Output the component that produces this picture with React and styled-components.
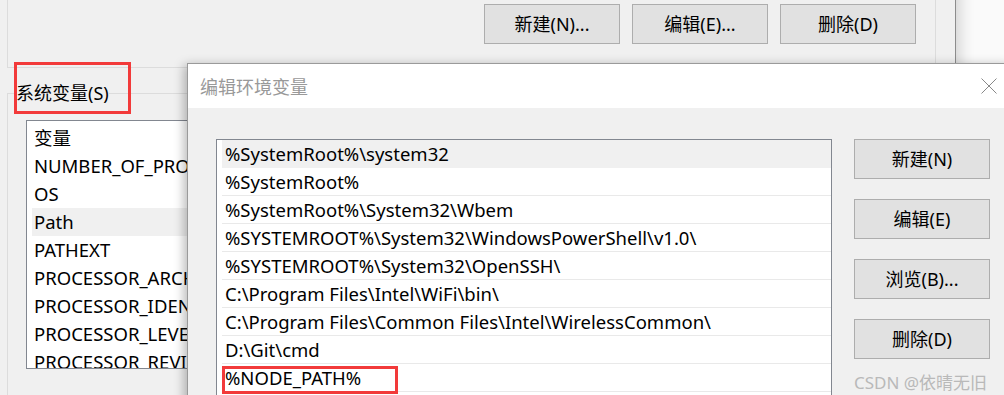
import React from 'react';
import styled, { createGlobalStyle } from 'styled-components';

const GlobalStyle = createGlobalStyle`
  html, body {
    margin: 0;
    padding: 0;
    background: #fff;
  }
  body {
    font-family: "Noto Sans", "Noto Sans CJK SC", sans-serif;
    font-size: 18px;
    color: #000;
  }
`;

const Desktop = styled.div`
  position: relative;
  width: 1004px;
  height: 395px;
  overflow: hidden;
  background: #fafafa;
`;

const BackWindow = styled.div`
  position: absolute;
  left: -12px;
  top: -60px;
  width: 968px;
  height: 480px;
  box-sizing: border-box;
  padding-left: 19px;
  background: #f0f0f0;
  border-right: 1px solid #8c8c8c;
  box-shadow: 4px 0 14px rgba(0, 0, 0, 0.16);
`;

const UserGroup = styled.div`
  margin-top: 20px;
  width: 929px;
  height: 108px;
  box-sizing: border-box;
  border: 1px solid #dcdcdc;
  border-top: none;
  padding: 0 19px 23px 0;
  display: flex;
  justify-content: flex-end;
  align-items: flex-end;
  gap: 12px;
`;

const WinButton = styled.button`
  width: 136px;
  height: 40px;
  box-sizing: border-box;
  border: 1px solid #adadad;
  background: #e1e1e1;
  font-family: inherit;
  font-size: 18px;
  color: #000;
  padding: 0;
  line-height: 1;
`;

const SystemGroup = styled.fieldset`
  margin: 13px 0 0 0;
  width: 929px;
  box-sizing: border-box;
  min-width: 0;
  height: 380px;
  border: 1px solid #dcdcdc;
  padding: 0 0 0 8px;
`;

const GroupLabel = styled.legend`
  position: relative;
  padding: 0;
  line-height: 24px;
  font-size: 18px;
  &::after {
    content: '';
    position: absolute;
    left: -2px;
    top: -19px;
    width: 117px;
    height: 52px;
    box-sizing: border-box;
    border: 3px solid #f23a3a;
  }
`;

const VarList = styled.div`
  margin: 15px 0 0 10px;
  width: 600px;
  height: 249px;
  box-sizing: border-box;
  border: 1px solid #828790;
  background: #fff;
  padding-top: 3px;
  overflow: hidden;
  font-size: 18.5px;
`;

const VarRow = styled.div`
  height: 28px;
  line-height: 28px;
  margin-left: 5px;
  padding-left: 2px;
  white-space: nowrap;
  background: ${(p) => (p.$selected ? '#f0f0f0' : 'transparent')};
`;

const Dialog = styled.div`
  position: absolute;
  left: 187px;
  top: 63px;
  width: 826px;
  height: 360px;
  box-sizing: border-box;
  border: 1px solid #9a9a9a;
  background: #f0f0f0;
  box-shadow: -3px 2px 10px rgba(0, 0, 0, 0.28);
  display: flex;
  flex-direction: column;
`;

const TitleBar = styled.div`
  height: 44px;
  flex: none;
  background: #fff;
  display: flex;
  align-items: center;
  justify-content: space-between;
  padding-left: 12px;
`;

const Title = styled.span`
  color: #999;
  font-size: 18px;
`;

const CloseButton = styled.div`
  width: 46px;
  height: 44px;
  display: flex;
  align-items: center;
  justify-content: center;
  color: #888;
`;

const DialogBody = styled.div`
  flex: 1;
  display: flex;
  align-items: flex-start;
  gap: 22px;
  padding: 31px 0 0 28px;
`;

const PathList = styled.div`
  width: 616px;
  height: 300px;
  box-sizing: border-box;
  border: 1px solid #828790;
  background: #fff;
  overflow: hidden;
  font-size: 18.5px;
`;

const PathRow = styled.div`
  position: relative;
  height: 28px;
  line-height: 27px;
  box-sizing: border-box;
  margin-left: 5px;
  padding-left: 3px;
  white-space: nowrap;
  border-bottom: 1px solid ${(p) => (p.$selected ? '#f0f0f0' : '#e9e9e9')};
  background: ${(p) => (p.$selected ? '#f0f0f0' : '#fff')};
  ${(p) =>
    p.$marked &&
    `
    &::after {
      content: '';
      position: absolute;
      left: 0;
      top: 2px;
      width: 176px;
      height: 28px;
      box-sizing: border-box;
      border: 3px solid #f23a3a;
    }
  `}
`;

const ButtonColumn = styled.div`
  display: flex;
  flex-direction: column;
  gap: 20px;
`;

const Watermark = styled.div`
  margin-top: -10px;
  font-size: 17px;
  color: #b9b9b9;
  white-space: nowrap;
`;

const systemVars = [
  '变量',
  'NUMBER_OF_PROCESSORS',
  'OS',
  'Path',
  'PATHEXT',
  'PROCESSOR_ARCHITECTURE',
  'PROCESSOR_IDENTIFIER',
  'PROCESSOR_LEVEL',
  'PROCESSOR_REVISION',
];

const paths = [
  '%SystemRoot%\\system32',
  '%SystemRoot%',
  '%SystemRoot%\\System32\\Wbem',
  '%SYSTEMROOT%\\System32\\WindowsPowerShell\\v1.0\\',
  '%SYSTEMROOT%\\System32\\OpenSSH\\',
  'C:\\Program Files\\Intel\\WiFi\\bin\\',
  'C:\\Program Files\\Common Files\\Intel\\WirelessCommon\\',
  'D:\\Git\\cmd',
  '%NODE_PATH%',
];

function CloseIcon() {
  return (
    <svg width="16" height="16" viewBox="0 0 16 16" fill="none">
      <path d="M0.5 0.5 L15.5 15.5 M15.5 0.5 L0.5 15.5" stroke="currentColor" strokeWidth="1" />
    </svg>
  );
}

export default function App() {
  return (
    <>
      <GlobalStyle />
      <Desktop>
        <BackWindow>
          <UserGroup>
            <WinButton>新建(N)...</WinButton>
            <WinButton>编辑(E)...</WinButton>
            <WinButton>删除(D)</WinButton>
          </UserGroup>
          <SystemGroup>
            <GroupLabel>系统变量(S)</GroupLabel>
            <VarList>
              {systemVars.map((v) => (
                <VarRow key={v} $selected={v === 'Path'}>
                  {v}
                </VarRow>
              ))}
            </VarList>
          </SystemGroup>
        </BackWindow>

        <Dialog>
          <TitleBar>
            <Title>编辑环境变量</Title>
            <CloseButton>
              <CloseIcon />
            </CloseButton>
          </TitleBar>
          <DialogBody>
            <PathList>
              {paths.map((p, i) => (
                <PathRow key={p} $selected={i === 0} $marked={p === '%NODE_PATH%'}>
                  {p}
                </PathRow>
              ))}
            </PathList>
            <ButtonColumn>
              <WinButton>新建(N)</WinButton>
              <WinButton>编辑(E)</WinButton>
              <WinButton>浏览(B)...</WinButton>
              <WinButton>删除(D)</WinButton>
              <Watermark>CSDN @依晴无旧</Watermark>
            </ButtonColumn>
          </DialogBody>
        </Dialog>
      </Desktop>
    </>
  );
}
